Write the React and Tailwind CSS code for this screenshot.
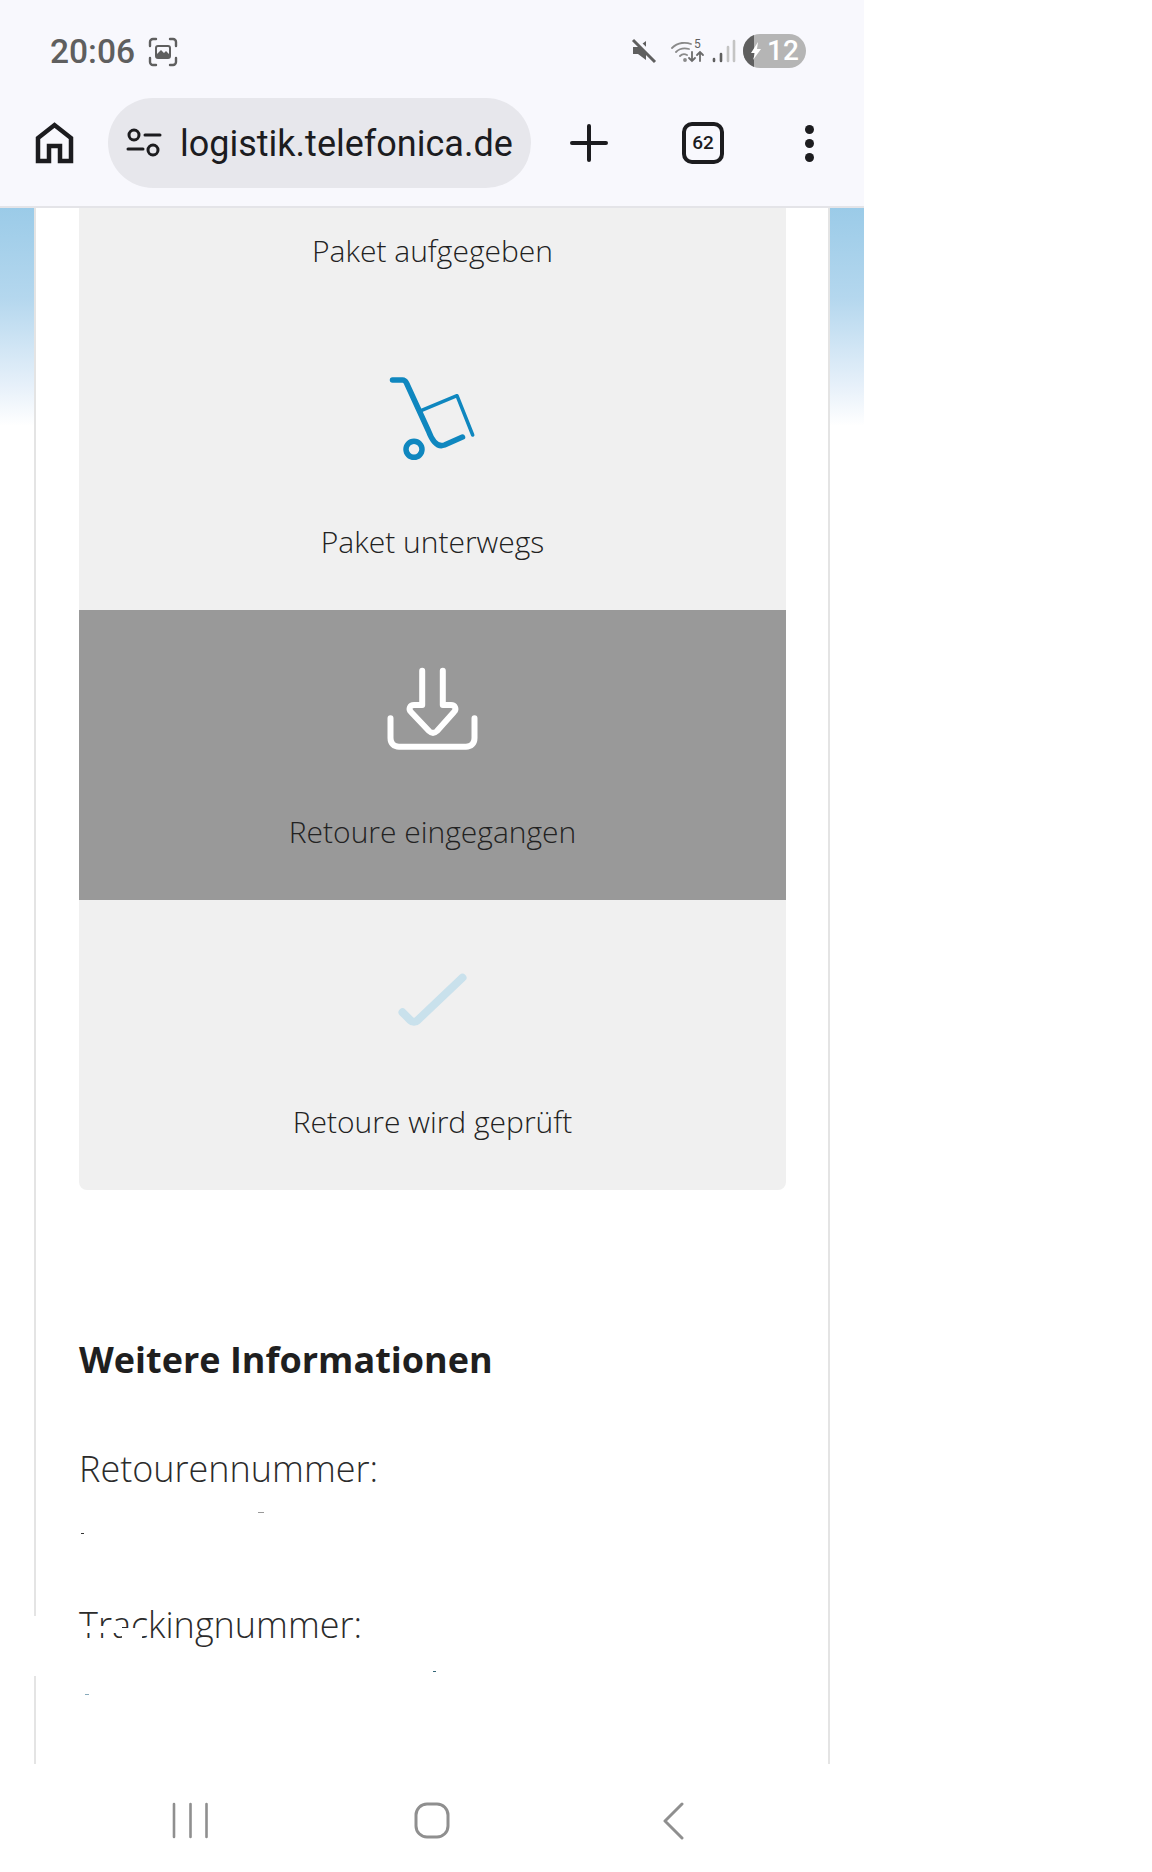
export default function App() {
  const label = "text-center text-[30px] leading-8 font-[350] text-[#222222] [font-family:'Open_Sans',sans-serif]";
  return (
    <div className="w-[1152px] h-[1872px] bg-white flex flex-col overflow-hidden">
      <div className="w-[864px] h-[1872px] flex flex-col">
        <header className="h-[208px] shrink-0 bg-[#f8f8fd] border-b-2 border-[#e4e4e8] flex flex-col">
          <div className="h-[98px] flex items-start justify-between pl-[50px] pr-[58px] pt-[35px]">
            <div className="flex items-center gap-[13px]">
              <span className="text-[33.5px] leading-[34px] font-medium text-[#5f5f5f] [font-family:Roboto,sans-serif]">20:06</span>
              <svg width="30" height="30" viewBox="0 0 30 30" fill="none" stroke="#5f5f5f" strokeWidth="2.4" strokeLinecap="round" strokeLinejoin="round">
                <path d="M2 9V5a3 3 0 0 1 3-3h3M22 2h3a3 3 0 0 1 3 3v4M28 21v4a3 3 0 0 1-3 3h-3M8 28H5a3 3 0 0 1-3-3v-4" />
                <rect x="8" y="9" width="14" height="12" rx="2" strokeWidth="2" />
                <path d="M9 17l4-4 3 3 2-2 3 3v3H9z" fill="#5f5f5f" stroke="none" />
              </svg>
            </div>
            <div className="flex items-center gap-[7px] h-[34px] -mt-[1px]">
              <svg width="26" height="26" viewBox="0 0 26 26" fill="#5f5f5f">
                <path d="M2 9h5l8-6v19l-8-6H2z" />
                <path d="M4 1l22 21" stroke="#f8f8fd" strokeWidth="4" />
                <path d="M2 2l22 22" stroke="#5f5f5f" strokeWidth="3" />
              </svg>
              <svg className="ml-[7px]" width="34" height="26" viewBox="0 0 34 26" fill="none" stroke="#8a8a8a" strokeWidth="1.8" strokeLinecap="round">
                <path d="M1 10c6-6 14-6 19-4M5 14c4-4 9-4 13-3M9 18c2-2 5-2 7-1" />
                <circle cx="14" cy="22" r="1" fill="#8a8a8a" />
                <path d="M21 14v9M18 20l3 3 3-3M29 23v-9M26 17l3-3 3 3" stroke="#6b6b6b" />
                <text x="23" y="10" fontSize="12" fontFamily="Roboto" fill="#5f5f5f" stroke="none">5</text>
              </svg>
              <svg width="24" height="26" viewBox="0 0 24 26" fill="none" strokeWidth="2.6" strokeLinecap="round">
                <path d="M2 23v-2M9 23v-7" stroke="#5f5f5f" />
                <path d="M16 23V9M22 23V3" stroke="#c4c4c4" />
              </svg>
              <div className="w-[63px] h-[34px] rounded-full bg-[#b5b5b5] overflow-hidden flex items-center">
                <div className="w-[11px] h-full bg-[#5f5f5f] shrink-0" />
                <svg className="-ml-[4px] shrink-0" width="12" height="20" viewBox="0 0 12 20" fill="#fff">
                  <path d="M8 1L1 12h4l-2 7 8-11H7z" />
                </svg>
                <span className="ml-[5px] text-[28px] leading-[34px] font-medium text-white [font-family:Roboto,sans-serif]">12</span>
              </div>
            </div>
          </div>
          <div className="h-[90px] flex items-center">
            <svg className="ml-[35px]" width="39" height="42" viewBox="0 0 39 42" fill="none" stroke="#1c1c1f" strokeWidth="4.5" strokeLinejoin="miter">
              <path d="M3 39V16L19.5 3 36 16v23H25V24H14v15z" />
            </svg>
            <div className="ml-[34px] w-[423px] h-[90px] rounded-full bg-[#e7e7ec] flex items-center">
              <svg className="ml-[18px]" width="36" height="30" viewBox="0 0 36 30" fill="none" stroke="#1c1c1f" strokeWidth="3" strokeLinecap="round">
                <circle cx="8" cy="7" r="5" />
                <path d="M19 7h15M2 21h15" />
                <circle cx="27" cy="22" r="5" />
              </svg>
              <span className="ml-[18px] mt-[2px] text-[36px] leading-[44px] text-[#1c1c1f] [font-family:Roboto,sans-serif]">logistik.telefonica.de</span>
            </div>
            <svg className="ml-[39px]" width="38" height="38" viewBox="0 0 38 38" fill="none" stroke="#1c1c1f" strokeWidth="4" strokeLinecap="round">
              <path d="M19 2v34M2 19h34" />
            </svg>
            <div className="ml-[74px] w-[42px] h-[42px] rounded-[10px] border-[4px] border-[#1c1c1f] flex items-center justify-center text-[19px] font-medium text-[#1c1c1f] [font-family:Roboto,sans-serif]">62</div>
            <div className="ml-[81px] flex flex-col gap-[5px]">
              <div className="w-[9px] h-[9px] rounded-full bg-[#1c1c1f]" />
              <div className="w-[9px] h-[9px] rounded-full bg-[#1c1c1f]" />
              <div className="w-[9px] h-[9px] rounded-full bg-[#1c1c1f]" />
            </div>
          </div>
        </header>

        <main className="relative flex-1 px-[34px] bg-[linear-gradient(to_bottom,#9bcbe8,#b4d7ee_90px,#e8f1fa_180px,#ffffff_218px)]">
          <div className="h-full bg-white border-x-2 border-[#e4e4e4] pl-[43px] pr-[42px] overflow-hidden">
            <div className="rounded-b-lg bg-[#f0f0f0] overflow-hidden">
              <div className="h-[112px] pt-[27px]">
                <p className={label}>Paket aufgegeben</p>
              </div>
              <div className="h-[290px] pt-[50px]">
                <svg className="mx-auto mb-[56px] block" width="100" height="100" viewBox="0 0 100 100" fill="none" stroke="#0f87bf" strokeLinecap="round" strokeLinejoin="round">
                  <path strokeWidth="5.5" d="M9.500 10h10c2 0 3 1 4 3l22 48c3 8 8 17 16 14l18-8" />
                  <path strokeWidth="3.5" d="M38 40.700L74 25.700 89.700 65" />
                  <circle cx="31" cy="79.300" r="8" strokeWidth="5.5" />
                </svg>
                <p className={label}>Paket unterwegs</p>
              </div>
              <div className="h-[290px] pt-[50px] bg-[#999999]">
                <svg className="mx-auto mb-[56px] block" width="100" height="100" viewBox="0 0 100 100" fill="none" stroke="#ffffff" strokeWidth="6" strokeLinecap="round" strokeLinejoin="round">
                  <path d="M39.200 10.700V45H31c-4 0-6 4-3 7l18 19c2.500 2.500 5.500 2.500 8 0l17-19c3-3 1-7-3-7h-8.200V10.700" />
                  <path d="M7.500 58.300V78c0 5.500 3.500 8.700 8.500 8.700h67c5 0 8.500-3.200 8.500-8.700V58.300" />
                </svg>
                <p className={label}>Retoure eingegangen</p>
              </div>
              <div className="h-[290px] pt-[50px]">
                <svg className="mx-auto mb-[56px] block" width="100" height="100" viewBox="0 0 100 100" fill="none" stroke="#c9e1ec" strokeWidth="8" strokeLinecap="round" strokeLinejoin="round">
                  <path d="M19.500 62.300l8 8c2 2 5 2 7 0L79.500 27.700" />
                </svg>
                <p className={label}>Retoure wird geprüft</p>
              </div>
            </div>

            <h2 className="mt-[146px] text-[36px] leading-[48px] font-bold text-[#1f1f1f] [font-family:'Open_Sans',sans-serif]">Weitere Informationen</h2>
            <p className="mt-[63px] text-[36px] leading-[44px] font-[350] text-[#2b2b2b] [font-family:'Open_Sans',sans-serif]">Retourennummer:</p>
            <p className="mt-[112px] text-[36px] leading-[44px] font-[350] text-[#2b2b2b] [font-family:'Open_Sans',sans-serif]">Trackingnummer:</p>
          </div>

          {/* redaction patches lying over the text and the card border */}
          <div className="absolute left-[84px] top-[1418px] w-[38px] h-[7px] bg-white" />
          <div className="absolute left-[122px] top-[1420px] w-[20px] h-[14px] bg-white" />
          <div className="absolute left-[32px] top-[1408px] w-[8px] h-[60px] bg-white" />
          <div className="absolute left-[258px] top-[1304px] w-[6px] h-px bg-[#999999]" />
          <div className="absolute left-[81px] top-[1325px] w-[3px] h-px bg-[#333333]" />
          <div className="absolute left-[433px] top-[1463px] w-[3px] h-px bg-[#336677]" />
          <div className="absolute left-[85px] top-[1486px] w-[4px] h-px bg-[#88aabb]" />

          <nav className="absolute left-0 right-0 bottom-0 h-[108px] bg-white">
            <svg className="absolute left-[170px] top-[38px]" width="40" height="40" viewBox="0 0 40 40" fill="none" stroke="#8f8f8f" strokeWidth="2.600" strokeLinecap="round">
              <path d="M4 2v33M20.500 2v33M36.500 2v33" />
            </svg>
            <svg className="absolute left-[413px] top-[38px]" width="40" height="40" viewBox="0 0 40 40" fill="none" stroke="#8f8f8f" strokeWidth="3">
              <rect x="3" y="2" width="32" height="33" rx="11" />
            </svg>
            <svg className="absolute left-[661px] top-[38px]" width="30" height="40" viewBox="0 0 30 40" fill="none" stroke="#8f8f8f" strokeWidth="3" strokeLinecap="round" strokeLinejoin="round">
              <path d="M21 2L4 19l17 17" />
            </svg>
          </nav>
        </main>
      </div>
    </div>
  );
}
